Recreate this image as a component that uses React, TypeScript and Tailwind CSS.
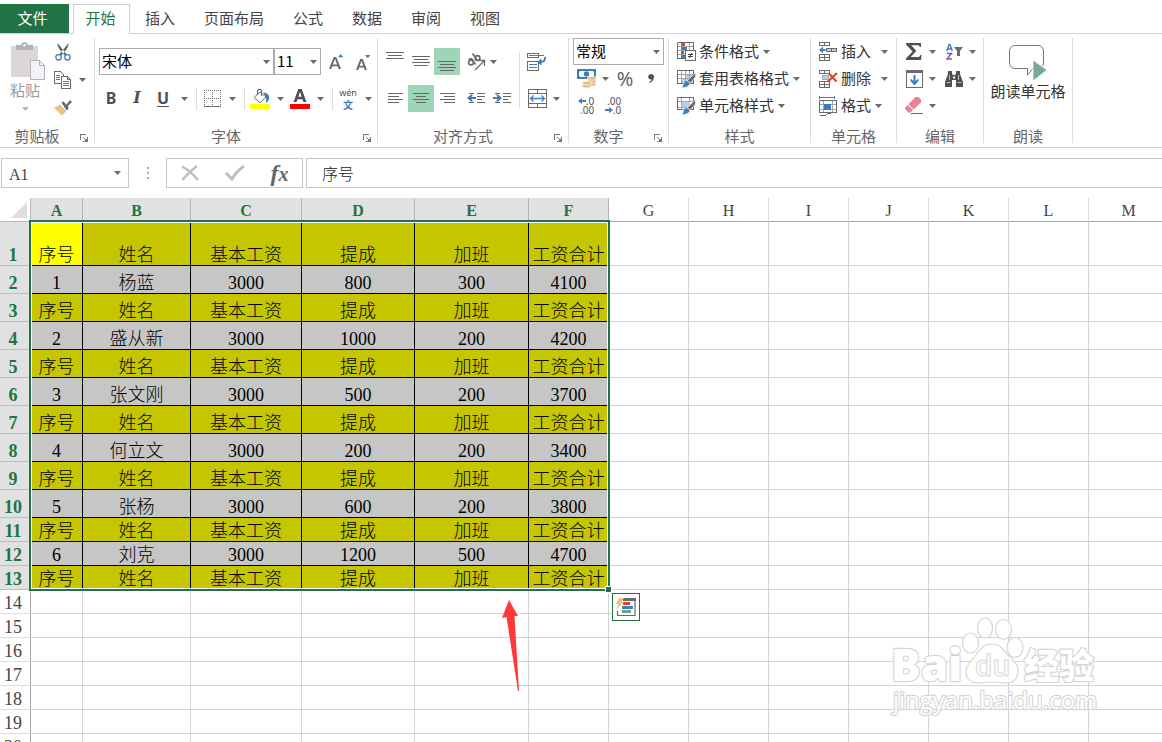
import React from "react";

const GRAY = "#6a6a6a";
const BLUE = "#3f7dbb";

const header = ["序号", "姓名", "基本工资", "提成", "加班", "工资合计"];
const staff = [
  ["1", "杨蓝", "3000", "800", "300", "4100"],
  ["2", "盛从新", "3000", "1000", "200", "4200"],
  ["3", "张文刚", "3000", "500", "200", "3700"],
  ["4", "何立文", "3000", "200", "200", "3400"],
  ["5", "张杨", "3000", "600", "200", "3800"],
  ["6", "刘克", "3000", "1200", "500", "4700"],
];
const dataRows: string[][] = [header, ...staff.flatMap((s) => [s, header])];
const columns = "ABCDEFGHIJKLM".split("");
const columnWidths = [
  "w-[52px]",
  "w-[108px]",
  "w-[111px]",
  "w-[113px]",
  "w-[114px]",
  "w-[80px]",
  "w-[80px]",
  "w-[80px]",
  "w-[80px]",
  "w-[80px]",
  "w-[80px]",
  "w-[80px]",
  "",
];
const rowNumbers = Array.from({ length: 20 }, (_, i) => i + 1);

type Kids = { children?: React.ReactNode };

function Svg({ w, h, crisp, children }: Kids & { w: number; h: number; crisp?: boolean }) {
  return (
    <svg
      width={w}
      height={h}
      viewBox={`0 0 ${w} ${h}`}
      fill="none"
      className="shrink-0"
      shapeRendering={crisp ? "crispEdges" : "auto"}
      aria-hidden="true"
    >
      {children}
    </svg>
  );
}

function Caret({ light }: { light?: boolean }) {
  return (
    <Svg w={7} h={4}>
      <path d="M0 0h7L3.5 4z" fill={light ? "#b5b5b5" : GRAY} />
    </Svg>
  );
}

function Tool({ label, className = "w-6", children }: Kids & { label: string; className?: string }) {
  return (
    <button aria-label={label} className={`flex h-[27px] shrink-0 items-center justify-center ${className}`}>
      {children}
    </button>
  );
}

function More({ label, className = "w-4" }: { label: string; className?: string }) {
  return (
    <Tool label={label} className={className}>
      <Caret />
    </Tool>
  );
}

function Divider() {
  return (
    <span className="flex w-2 justify-center">
      <span className="h-[22px] w-px bg-[#dcdcdc]" />
    </span>
  );
}

function Group({ name, width, launcher, children }: Kids & { name: string; width: string; launcher?: boolean }) {
  return (
    <section className={`flex shrink-0 flex-col border-r border-[#dcdcdc] ${width}`}>
      <div className="h-[90px]">{children}</div>
      <div className="flex h-[15px] items-center text-[#666]">
        <h2 className="flex-1 text-center leading-3.5">{name}</h2>
        {launcher && (
          <button aria-label={`${name}设置`} className="flex w-5 justify-center pt-1">
            <Svg w={8} h={8} crisp>
              <path d="M.5 6V.5H6M7.5 3v4.5H3M3 3l4 4" stroke="#777" />
              <path d="M7 4v3H4z" fill="#777" />
            </Svg>
          </button>
        )}
      </div>
    </section>
  );
}

function Lines({ rows, w = 18, h = 14 }: { rows: [number, number, number][]; w?: number; h?: number }) {
  return (
    <Svg w={w} h={h} crisp>
      {rows.map(([x, y, len]) => (
        <rect key={y} x={x} y={y} width={len} height={1} fill="#666" />
      ))}
    </Svg>
  );
}

function Picker({ label, options, width, height = "h-[27px]" }: { label: string; options: string[]; width: string; height?: string }) {
  return (
    <label className={`relative flex items-center ${width} ${height}`}>
      <select
        aria-label={label}
        className="size-full appearance-none border border-[#ababab] bg-white pl-0.5 text-[15px] text-black outline-none"
      >
        {options.map((o) => (
          <option key={o}>{o}</option>
        ))}
      </select>
      <span className="pointer-events-none absolute right-1">
        <Caret />
      </span>
    </label>
  );
}

function TableBrush({ full }: { full?: boolean }) {
  return (
    <Svg w={19} h={18}>
      <g shapeRendering="crispEdges">
        <path d={full ? "M.5.5h16v12H.5z" : "M.5.5h16v13H.5z"} stroke={GRAY} />
        {full ? (
          <>
            <path d="M5 5h8v6H5z" fill="#b9d0e6" />
            <path d="M4.5 1v12M1 4.5h15M12.5 1v4M1 10.5h11" stroke="#a5a5a5" />
          </>
        ) : (
          <>
            <path d="M9 5h7v8H5V9h4z" fill="#b9d0e6" />
            <path d="M4.5 1v12M8.5 1v12M12.5 1v12M1 4.5h15M1 8.5h15" stroke="#a5a5a5" />
          </>
        )}
      </g>
      <path d="M18.500 2.500v4.500l-5 6-3.500-2z" fill={GRAY} stroke="#fff" strokeWidth=".6" />
      <path d="M9.500 10.500l3.500 2.700c-.8 3.300-4 4.500-9 4.300 2.200-1 2-2.300 2.700-4.300.6-1.500 1.500-2.500 2.800-2.700z" fill={BLUE} stroke="#fff" strokeWidth=".5" />
    </Svg>
  );
}

function Labeled({ icon, text, wide }: { icon: React.ReactNode; text: string; wide?: boolean }) {
  return (
    <button className="flex h-[27px] items-center pl-2 leading-5 text-[#333]">
      <span className="flex w-[22px]">{icon}</span>
      <span className="pb-0.5">{text}</span>
      <span className={wide ? "pl-[10px]" : "pl-1"}>
        <Caret />
      </span>
    </button>
  );
}

function Ribbon() {
  return (
    <div className="flex shrink-0 overflow-hidden border-b border-[#d0d0d0] py-1 text-[15px]">
      <Group name="剪贴板" width="w-[95px]" launcher>
        <div className="flex">
          <button className="flex w-[50px] flex-col items-center pt-1 leading-5 text-[#9a9a9a]">
            <Svg w={41} h={38}>
              <path d="M6 4h27v31H6z" fill="#dad6da" />
              <path d="M11 8V3h5c0-1.500 1.500-3 3.500-3S23 1.500 23 3h5v5z" fill="#b3b1b4" />
              <circle cx="19.500" cy="3.200" r="1.300" fill="#fff" />
              <path d="M25.500 18.500h9l5 5v14h-14z" fill="#f5f1f8" stroke="#b5b1b6" />
              <path d="M34.500 18.500v5h5" stroke="#b5b1b6" />
            </Svg>
            <span>粘贴</span>
            <span className="flex h-[18px] items-center">
              <Caret light />
            </span>
          </button>
          <div className="flex flex-col gap-px">
            <Tool label="剪切" className="w-[26px]">
              <Svg w={16} h={18}>
                <path d="M2.500 0c0 2.500.6 4.500 2 6.500l5 6 2-1.500z M13.500 0c0 2.500-.6 4.500-2 6.500l-5 6-2-1.500z" fill={GRAY} />
                <circle cx="3.500" cy="14.300" r="2.700" stroke={BLUE} strokeWidth="1.300" fill="#fff" />
                <circle cx="12.500" cy="14.300" r="2.700" stroke={BLUE} strokeWidth="1.300" fill="#fff" />
              </Svg>
            </Tool>
            <div className="flex">
              <Tool label="复制" className="w-[26px]">
                <Svg w={18} h={18} crisp>
                  <path d="M.5.5h6l3 3v9h-9z" fill="#fff" stroke={GRAY} />
                  <path d="M2 4.500h4M2 6.500h4M2 8.500h4" stroke={BLUE} />
                  <path d="M7.500 5.500h6l3 3v9h-9z" fill="#fff" stroke={GRAY} />
                  <path d="M13.500 5.500v3h3" stroke={GRAY} />
                  <path d="M9 10.500h6M9 12.500h6M9 14.500h6" stroke={BLUE} />
                </Svg>
              </Tool>
              <More label="复制选项" className="w-3" />
            </div>
            <Tool label="格式刷" className="w-[26px]">
              <Svg w={18} h={16}>
                <path d="M6 4.500L12.500 11 8 15.500 0 8z" fill="#eac282" />
                <path d="M7.500 2.500l2-1 3 3L16 0l2 2-4 4 .5 3-2 1.500z" fill={GRAY} />
                <path d="M6 4l7 7" stroke="#fff" />
              </Svg>
            </Tool>
          </div>
        </div>
      </Group>

      <Group name="字体" width="w-[283px]" launcher>
        <div className="flex flex-col gap-[10px] pt-[10px]">
          <div className="flex pl-1">
            <Picker label="字体" options={["宋体", "黑体"]} width="w-[175px]" />
            <Picker label="字号" options={["11", "12", "14"]} width="w-[47px]" />
            <Tool label="增大字号" className="w-[30px]">
              <Svg w={15} h={18}>
                <path d="M0 16L4.700 4h2.600L12 16H9.700l-1-2.800H3.200L2.200 16zm3.900-4.600h4.200L6 5.800z" fill={GRAY} />
                <path d="M9 4.200L11.700 1l2.700 3.200z" fill={BLUE} />
              </Svg>
            </Tool>
            <Tool label="减小字号" className="w-6">
              <Svg w={15} h={18}>
                <path d="M0 17L4.200 6h2.600L11 17H8.800l-.9-2.500H3.100L2.200 17zm3.700-4.200h3.600L5.500 7.800z" fill={GRAY} />
                <path d="M9 2h5.400l-2.700 3.200z" fill={BLUE} />
              </Svg>
            </Tool>
          </div>
          <div className="flex items-center pl-[3px] text-[#505050]">
            <Tool label="加粗" className="w-[26px]">
              <span className="pb-0.5 font-['Noto_Sans'] text-base font-bold">B</span>
            </Tool>
            <Tool label="倾斜" className="w-[26px]">
              <span className="pb-0.5 font-['DejaVu_Serif',serif] text-base font-bold italic">I</span>
            </Tool>
            <Tool label="下划线" className="w-[26px]">
              <span className="border-b border-[#505050] font-['Noto_Sans'] text-base leading-4 font-bold">U</span>
            </Tool>
            <More label="下划线选项" />
            <Divider />
            <Tool label="边框">
              <Svg w={17} h={18} crisp>
                <path d="M0 .5h17M0 8.500h17M.5 0v16M8.500 0v16M16.500 0v16" stroke={GRAY} strokeDasharray="1 1" />
                <path d="M0 16.500h17" stroke={GRAY} />
              </Svg>
            </Tool>
            <More label="边框选项" />
            <Divider />
            <Tool label="填充颜色">
              <Svg w={20} h={20}>
                <path d="M0 15h20v5H0z" fill="#ff0" />
                <path d="M4 8.500L10 3l6 5-6 5.700z" fill="#fff" stroke={GRAY} />
                <path d="M7.500 6V2.500C7.500-.2 11.500-.2 11.500 2.500V7" stroke={GRAY} strokeWidth="1.200" />
                <path d="M13 3.500c4.500 0 6.500 2.500 6.200 5.500-.2 2-1.500 3.700-2.700 5-.8-2.500 0-4.500-.8-6.500z" fill={BLUE} />
              </Svg>
            </Tool>
            <More label="填充颜色选项" />
            <Tool label="字体颜色">
              <Svg w={20} h={20}>
                <path d="M0 15h20v5H0z" fill="#f00" />
                <path d="M3.500 13L8.300 0h3.400l4.800 13h-3.100l-1-2.800H7.500l-1 2.800zm4.800-5.200h3.300L10 2.800z" fill="#505050" />
              </Svg>
            </Tool>
            <More label="字体颜色选项" />
            <Divider />
            <Tool label="拼音">
              <span className="flex flex-col items-center gap-0.5">
                <span className="font-['Noto_Sans'] text-[9px] leading-[9px]">wén</span>
                <span className="text-[10px] leading-[11px] font-bold text-[#3f7dbb]">文</span>
              </span>
            </Tool>
            <More label="拼音选项" />
          </div>
        </div>
      </Group>

      <Group name="对齐方式" width="w-[191px]" launcher>
        <div className="flex pt-[10px] pl-1">
          <div className="flex flex-col gap-[10px]">
            <div className="flex">
              <Tool label="顶端对齐" className="w-[26px]">
                <Lines h={20} rows={[[0, 0, 18], [2, 3, 14], [0, 6, 18]]} />
              </Tool>
              <Tool label="垂直居中" className="w-[26px]">
                <Lines rows={[[0, 1, 18], [2, 4, 14], [0, 7, 18], [2, 10, 14]]} />
              </Tool>
              <Tool label="底端对齐" className="w-[26px] bg-[#9fd5b7]">
                <Lines h={20} rows={[[0, 9, 18], [2, 12, 14], [0, 15, 18], [2, 18, 14]]} />
              </Tool>
              <Tool label="方向" className="ml-[3px] w-[26px]">
                <Svg w={19} h={18}>
                  <g stroke={GRAY} strokeWidth="1.600">
                    <circle cx="4" cy="9.500" r="2.400" />
                    <path d="M1.800 6.800C3 5 4.500 5.500 5.500 7l3 4.500" />
                    <circle cx="10.500" cy="5" r="2.400" />
                    <path d="M5.500.5l4.500 6.500" />
                    <path d="M8 17L17 8M17.500 13V7.500H12" strokeWidth="1.300" />
                  </g>
                </Svg>
              </Tool>
              <More label="方向选项" className="w-2" />
            </div>
            <div className="flex">
              <Tool label="左对齐" className="w-[26px]">
                <Lines w={15} h={13} rows={[[0, 1, 15], [0, 4, 11], [0, 7, 15], [0, 10, 11]]} />
              </Tool>
              <Tool label="居中" className="w-[26px] bg-[#9fd5b7]">
                <Lines w={16} h={13} rows={[[0, 1, 16], [3, 4, 10], [0, 7, 16], [3, 10, 10]]} />
              </Tool>
              <Tool label="右对齐" className="w-[26px]">
                <Lines w={15} h={13} rows={[[0, 1, 15], [4, 4, 11], [0, 7, 15], [4, 10, 11]]} />
              </Tool>
              <Tool label="减少缩进" className="ml-[3px] w-[26px]">
                <Svg w={18} h={13}>
                  <path d="M2 1h5v1H2zm8 0h8v1h-8zm0 3h8v1h-8zm0 3h5v1h-5zM2 10h5v1H2zm8 0h8v1h-8z" fill="#666" />
                  <path d="M0 6l4-3.500h2L4.500 5H9v2H4.500L6 9.500H4z" fill={BLUE} />
                </Svg>
              </Tool>
              <Tool label="增加缩进" className="w-[26px]">
                <Svg w={18} h={13}>
                  <path d="M2 1h5v1H2zm8 0h8v1h-8zm0 3h8v1h-8zm0 3h5v1h-5zM2 10h5v1H2zm8 0h8v1h-8z" fill="#666" />
                  <path d="M9 6L5 2.500H3L4.500 5H0v2h4.500L3 9.500h2z" fill={BLUE} />
                </Svg>
              </Tool>
            </div>
          </div>
          <span className="mt-1 h-14 w-[5px] border-r border-[#dcdcdc]" />
          <div className="flex flex-col gap-[10px] pl-1">
            <Tool label="自动换行" className="w-[26px]">
              <Svg w={20} h={18}>
                <g shapeRendering="crispEdges">
                  <path d="M.5.5h11v4H.5zM.5 8.500h11v9H.5z" stroke={GRAY} />
                  <path d="M2 2.500h15M2 11.500h8M2 14.500h8" stroke={BLUE} />
                </g>
                <path d="M18 4c.5 3.500-1 5-5 5" stroke={BLUE} strokeWidth="2" />
                <path d="M10 9l4.500-3.500v7z" fill={BLUE} />
              </Svg>
            </Tool>
            <div className="flex">
              <Tool label="合并后居中" className="w-[26px]">
                <Svg w={19} h={19}>
                  <path d="M.5.500h18v18H.5zM.5 4.500h18M.5 14.500h18M9.500.500v4M9.500 14.500v4" stroke={GRAY} shapeRendering="crispEdges" />
                  <path d="M3 9.500h13M5.500 6.500l-3 3 3 3M13.500 6.500l3 3-3 3" stroke={BLUE} strokeWidth="1.300" />
                </Svg>
              </Tool>
              <More label="合并选项" className="w-3" />
            </div>
          </div>
        </div>
      </Group>

      <Group name="数字" width="w-[100px]" launcher>
        <div className="flex flex-col pl-1">
          <Picker label="数字格式" options={["常规", "数值", "货币"]} width="w-[91px]" />
          <div className="flex">
            <Tool label="会计数字格式" className="w-[26px]">
              <Svg w={19} h={19}>
                <path d="M0 0h19v10H0z" fill={BLUE} />
                <path d="M3 2h13l1 1.500v3L16 8H3L2 6.500v-3z" fill="#fff" />
                <circle cx="9.500" cy="5" r="2.700" fill={BLUE} />
                <g fill="#e9bd7e" stroke="#fff" strokeWidth=".6">
                  <rect x="10.500" y="13.500" width="8.500" height="3.500" rx="1.600" />
                  <rect x="10.500" y="10.500" width="8.500" height="3.500" rx="1.600" />
                  <rect x="10.500" y="7.500" width="8.500" height="3.500" rx="1.600" />
                  <rect x="5.500" y="15.300" width="8.500" height="3.500" rx="1.600" />
                  <rect x="5.500" y="12.300" width="8.500" height="3.500" rx="1.600" />
                </g>
              </Svg>
            </Tool>
            <More label="会计格式选项" className="w-3" />
            <Tool label="百分比样式" className="w-7">
              <span className="font-['Noto_Sans'] text-xl leading-6 text-[#666]">%</span>
            </Tool>
            <Tool label="千位分隔样式">
              <Svg w={6} h={9}>
                <path d="M3 0c2 0 3 1.300 3 3 0 2.700-2 5-4.500 6L1 8.200C2.600 7.400 3.300 6.500 3.400 5.500 1.200 5.700.2 4.300.2 2.800.2 1.200 1.400 0 3 0z" fill="#555" />
              </Svg>
            </Tool>
          </div>
          <div className="flex font-['Noto_Sans'] text-[10px] leading-[9px] text-[#555]">
            <Tool label="增加小数位数" className="w-[26px]">
              <span className="flex flex-col items-end">
                <span className="flex items-center">
                  <Svg w={8} h={6}>
                    <path d="M0 3l4-3v2h4v2H4v2z" fill={BLUE} />
                  </Svg>
                  .0
                </span>
                <span>.00</span>
              </span>
            </Tool>
            <Tool label="减少小数位数" className="w-7">
              <span className="flex flex-col items-end">
                <span>.00</span>
                <span className="flex items-center">
                  <Svg w={8} h={6}>
                    <path d="M8 3L4 0v2H0v2h4v2z" fill={BLUE} />
                  </Svg>
                  .0
                </span>
              </span>
            </Tool>
          </div>
        </div>
      </Group>

      <Group name="样式" width="w-[142px]">
        <div className="flex flex-col items-start">
          <Labeled
            text="条件格式"
            icon={
              <Svg w={19} h={19} crisp>
                <path d="M.5.5h16v16H.5zM4.500 1v16M12.500 1v16M1 4.500h16M1 8.500h16M1 12.500h16" stroke="#a5a5a5" />
                <path d="M.5.5h16v10M.5.5v16H8" stroke={GRAY} />
                <path d="M4 1h4v3H4zM4 9h3v3H4z" fill="#d24726" />
                <path d="M4 5h6v3H4zM4 13h4v3H4z" fill={BLUE} />
                <path d="M8.500 8.500h10v10h-10z" fill="#fff" stroke={GRAY} />
                <path d="M11 12.500h5M11 14.500h5M15 11l-3 5" stroke="#444" />
              </Svg>
            }
          />
          <Labeled text="套用表格格式" icon={<TableBrush />} />
          <Labeled text="单元格样式" icon={<TableBrush full />} />
        </div>
      </Group>

      <Group name="单元格" width="w-[86px]">
        <div className="flex flex-col items-start">
          <Labeled
            text="插入"
            wide
            icon={
              <Svg w={19} h={19}>
                <g shapeRendering="crispEdges" stroke={GRAY}>
                  <path d="M.5.5h10v3H.5zM5.500.5v3M.5 12.500h10v6H.5zM5.500 12.500v6M.5 15.500h10" />
                  <path d="M7.500 6.500h10v3h-10zM12.500 6.500v3" fill="#b9d0e6" />
                </g>
                <path d="M0 8l4-3.500v2.500h2.500v2H4v2.500z" fill={BLUE} />
              </Svg>
            }
          />
          <Labeled
            text="删除"
            wide
            icon={
              <Svg w={19} h={18}>
                <g shapeRendering="crispEdges" stroke={GRAY}>
                  <path d="M.5.5h10v3H.5zM5.500.5v3M.5 11.500h10v6H.5zM5.500 11.500v6M.5 14.500h10" />
                  <path d="M3.500 5.500h6v4h-6z" fill="#b9d0e6" stroke="#9ab" />
                </g>
                <path d="M9.500 3l8 8.500M18 3L9 11.500" stroke="#d24726" strokeWidth="2" />
              </Svg>
            }
          />
          <Labeled
            text="格式"
            icon={
              <Svg w={18} h={20} crisp>
                <path d="M1 1.500h14M.5 0v3M15.500 0v3" stroke={BLUE} />
                <path d="M4.500 5v12M13.500 5v12M1 8.500h17M1 13.500h17" stroke="#a5a5a5" />
                <path d="M.5 4.500h17v12H.5z" stroke={GRAY} />
                <path d="M5 8h7v6H5z" fill={BLUE} />
                <path d="M1 19.500h5l3-2h3" stroke={GRAY} />
              </Svg>
            }
          />
        </div>
      </Group>

      <Group name="编辑" width="w-[87px]">
        <div className="flex flex-col pl-[5px]">
          <div className="flex">
            <Tool label="自动求和">
              <Svg w={16} h={17}>
                <path d="M0 0h15v4h-1.200c-.3-1.300-.8-1.800-2-1.800H5.300l5 5.800-5.600 6H12c1.300 0 1.800-.5 2.300-2H15.500L15 17H0v-1.500L6.500 8.500 0 1.500z" fill="#505050" />
              </Svg>
            </Tool>
            <More label="求和选项" className="w-3" />
            <Tool label="排序和筛选" className="ml-1 w-6">
              <Svg w={17} h={16}>
                <path d="M.7 7L3 .7h1L6.300 7M1.600 5h3.800" stroke={BLUE} strokeWidth="1.400" />
                <path d="M1 9.500h4.500L1 15h5" stroke="#8a4fb5" strokeWidth="1.400" />
                <path d="M8 3h9l-3 4v5h-3V7z" fill={GRAY} />
              </Svg>
            </Tool>
            <More label="排序选项" className="w-3" />
          </div>
          <div className="flex">
            <Tool label="填充">
              <Svg w={17} h={18}>
                <path d="M.5.5h16v17H.5z" stroke={GRAY} shapeRendering="crispEdges" />
                <path d="M0 0h17v3H0z" fill={GRAY} />
                <path d="M7.500 5h2v6l3-2.500v2.500l-4 4.500-4-4.500V8.500l3 2.500z" fill={BLUE} />
              </Svg>
            </Tool>
            <More label="填充选项" className="w-3" />
            <Tool label="查找和选择" className="ml-1 w-6">
              <Svg w={18} h={16}>
                <path d="M3 0h4v3l1 1h2l1-1V0h4v3l3 8v5h-7V9H7v7H0v-5l3-8z" fill="#505050" />
                <path d="M8 5.500h2v2H8z" fill="#fff" />
                <path d="M4.500 4v5M13.500 4v5M1.500 11.500h4M12.500 11.500h4" stroke="#bbb" />
              </Svg>
            </Tool>
            <More label="查找选项" className="w-3" />
          </div>
          <div className="flex">
            <Tool label="清除">
              <Svg w={18} h={17}>
                <path d="M10.500 0h3L16 2.500v3L8.500 12.500 3.500 7z" fill="#e8849a" />
                <path d="M3 8l5 5-2.500 2.500h-2L0 12v-1.500z" fill="#e8849a" />
                <path d="M6 16.500h12" stroke={GRAY} />
              </Svg>
            </Tool>
            <More label="清除选项" className="w-3" />
          </div>
        </div>
      </Group>

      <Group name="朗读" width="w-[89px]">
        <button className="flex w-full flex-col items-center pt-[7px] leading-5 text-[#333]">
          <Svg w={38} h={36}>
            <path d="M6 .5h23c3 0 5.500 2.500 5.500 5.500v12c0 3-2.500 5.500-5.500 5.500h-5L18.500 30v-6.500H6C3 23.500.5 21 .5 18V6C.5 3 3 .5 6 .5z" fill="#fff" stroke="#777" />
            <path d="M24 15l14 10-14 11z" fill="#76a898" stroke="#fff" strokeWidth=".8" />
          </Svg>
          <span>朗读单元格</span>
        </button>
      </Group>
    </div>
  );
}

function FormulaBar() {
  return (
    <div className="flex h-[50px] shrink-0 items-center text-base">
      <div className="ml-px flex h-[30px] w-32 shrink-0 items-center border border-[#c6c6c6]">
        <input
          aria-label="名称框"
          defaultValue="A1"
          className="w-full min-w-0 pt-1 pl-[7px] font-['Liberation_Serif',serif] text-[#444] outline-none"
        />
        <More label="名称列表" className="w-[22px]" />
      </div>
      <div className="flex w-[37px] shrink-0 justify-center">
        <Svg w={2} h={12} crisp>
          <path d="M0 0h2v2H0zM0 5h2v2H0zM0 10h2v2H0z" fill="#aaa" />
        </Svg>
      </div>
      <div className="flex h-[30px] w-[137px] shrink-0 items-center justify-around border border-[#c6c6c6]">
        <Tool label="取消">
          <Svg w={18} h={16}>
            <path d="M1 1.500C6 4 12 9 17 15M16 1C11 5 6 9 1.500 15" stroke="#bdbdbd" strokeWidth="2.400" />
          </Svg>
        </Tool>
        <Tool label="输入">
          <Svg w={20} h={16}>
            <path d="M1 8l6 6C10 9 14 4.500 19 1" stroke="#bdbdbd" strokeWidth="3" />
          </Svg>
        </Tool>
        <Tool label="插入函数">
          <span className="font-['Liberation_Serif',serif] text-2xl leading-6 font-bold text-[#666] italic">
            f<span className="text-xl leading-6">x</span>
          </span>
        </Tool>
      </div>
      <input
        aria-label="编辑栏"
        defaultValue="序号"
        className="ml-[3px] h-[30px] min-w-0 flex-1 border border-r-0 border-[#c6c6c6] pl-[15px] font-['Noto_Sans_CJK_SC',sans-serif] font-light text-[#222] outline-none"
      />
    </div>
  );
}

function Watermark() {
  return (
    <svg
      className="pointer-events-none absolute top-[418px] left-[888px]"
      width="216"
      height="104"
      viewBox="0 0 216 104"
      fill="#fff"
      stroke="#d6d6d6"
      strokeWidth="1.200"
      fontFamily="'Open Sans', 'Noto Sans CJK SC', sans-serif"
    >
      <g fillOpacity=".8">
        <ellipse cx="82.500" cy="27" rx="8" ry="10" />
        <ellipse cx="97" cy="12" rx="7.500" ry="10" />
        <ellipse cx="115.500" cy="13.500" rx="8" ry="10" />
        <ellipse cx="127" cy="31.500" rx="8" ry="10" />
        <path d="M104 28c9 0 11 6 16 11 6 6 11 10 10 18-1 7-6 10-12 10-5 0-9-1-14-1s-9 1-14 1c-7 0-12-4-12-11 0-8 6-11 10-17 4-6 8-11 16-11z" />
      </g>
      <text x="87" y="60" fontSize="28" fontWeight="600" strokeWidth="1">du</text>
      <g strokeWidth="2.400" strokeLinejoin="round" paintOrder="stroke">
        <text x="3" y="65" fontSize="44" fontWeight="800">Bai</text>
        <text x="136" y="63" fontSize="35" fontWeight="900">经验</text>
        <text x="5" y="93" fontSize="24">jingyan.baidu.com</text>
      </g>
    </svg>
  );
}

function Sheet() {
  return (
    <div className="relative min-h-0 flex-1 overflow-hidden">
      <table className="w-full min-w-[1169px] table-fixed border-separate border-spacing-0 font-['Liberation_Serif','Noto_Sans_CJK_SC',serif] text-lg leading-5">
        <colgroup>
          <col className="w-[31px]" />
          {columns.map((c, i) => (
            <col key={c} className={columnWidths[i]} />
          ))}
        </colgroup>
        <thead>
          <tr className="h-6 text-base leading-5">
            <th aria-label="全选" className="border-r border-b border-[#b5b5b5] p-0">
              <span className="flex justify-end pr-[3px]">
                <Svg w={16} h={16}>
                  <path d="M16 0v16H0z" fill="#dedede" />
                </Svg>
              </span>
            </th>
            {columns.map((c, i) => (
              <th
                key={c}
                scope="col"
                className={
                  i < 6
                    ? "border-r border-b border-[#b5b5b5] bg-[#e1e1e1] p-0 pt-0.5 font-bold text-[#217346]"
                    : "border-r border-b border-r-[#dcdcdc] border-b-[#a6a6a6] p-0 pt-0.5 font-normal text-[#444]"
                }
              >
                {c}
              </th>
            ))}
          </tr>
        </thead>
        <tbody>
          {rowNumbers.map((n) => {
            const cells = dataRows[n - 1];
            const isHeader = n % 2 === 1;
            return (
              <tr key={n} className={n === 1 ? "h-11" : n <= 10 ? "h-7" : "h-6"}>
                <th
                  scope="row"
                  className={
                    cells
                      ? "border-r border-b border-r-[#217346] border-b-[#bdbdbd] bg-[#e1e1e1] p-0 pr-1 align-bottom font-bold text-[#217346]"
                      : "border-r border-b border-r-[#a6a6a6] border-b-[#dcdcdc] p-0 pr-1 align-bottom font-normal text-[#444]"
                  }
                >
                  {n}
                </th>
                {columns.map((c, i) =>
                  cells && i < 6 ? (
                    <td
                      key={c}
                      className={`border-r border-b border-black p-0 text-center align-bottom font-light whitespace-nowrap text-black ${
                        n === 1 && i === 0 ? "bg-[#ffff00]" : isHeader ? "bg-[#c5c500]" : "bg-[#c6c6c6]"
                      }`}
                    >
                      {cells[i]}
                    </td>
                  ) : (
                    <td key={c} className="border-r border-b border-[#d4d4d4] p-0" />
                  )
                )}
              </tr>
            );
          })}
        </tbody>
      </table>

      <div className="pointer-events-none absolute top-[22px] left-[29px] h-[371px] w-[581px] border-2 border-[#217346] inset-shadow-[0_0_0_1px_#ffffff]">
        <span className="absolute -right-1 -bottom-1 size-[7px] border border-white bg-[#217346]" />
      </div>

      <button
        aria-label="快速分析"
        className="absolute top-[395px] left-[612px] flex size-7 items-center justify-center border border-[#217346] bg-white"
      >
        <Svg w={20} h={19}>
          <path d="M7 1h12v16.500H1.500V13" stroke={GRAY} strokeWidth="1.200" />
          <path d="M7 0h13v3H7z" fill={GRAY} />
          <path d="M7 4h7v3H7z" fill="#d24726" />
          <path d="M6 8h11v3H6z" fill={BLUE} />
          <path d="M6 12h9v3H6z" fill="#67a58c" />
          <path d="M3 0h5L5.500 4H8L0 12l2.500-6H0z" fill="#ecc27d" />
        </Svg>
      </button>

      <svg
        className="pointer-events-none absolute top-[402px] left-[502px]"
        width="18"
        height="92"
        viewBox="0 0 18 92"
        aria-hidden="true"
      >
        <path d="M7 0L16 16H12.500L17 91H16L4.500 17L0 18z" fill="#ff3939" />
      </svg>

      <Watermark />
    </div>
  );
}

export default function App() {
  return (
    <div className="flex h-screen flex-col overflow-hidden bg-white font-['Noto_Sans_CJK_SC',sans-serif]">
      <nav className="flex h-[34px] shrink-0 items-end border-b border-[#d0d0d0] text-[15px] leading-5 text-[#444]">
        <button className="h-[29px] w-[69px] bg-[#217346] pr-1 pb-0.5 text-white">文件</button>
        <button className="-mb-px ml-1 h-[30px] w-[57px] border border-b-0 border-[#d0d0d0] bg-white pr-0.5 pb-1 text-[#217346]">
          开始
        </button>
        <div className="ml-[15px] flex h-[29px] items-center gap-[29px] pb-0.5">
          {["插入", "页面布局", "公式", "数据", "审阅", "视图"].map((t) => (
            <button key={t}>{t}</button>
          ))}
        </div>
      </nav>
      <Ribbon />
      <FormulaBar />
      <Sheet />
    </div>
  );
}
